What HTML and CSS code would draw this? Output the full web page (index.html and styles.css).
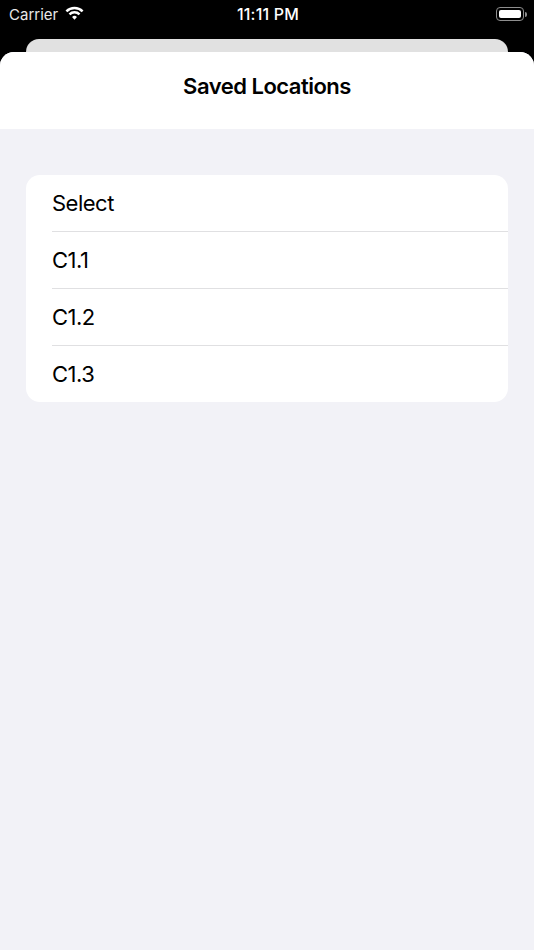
FILE: index.html
```html
<!DOCTYPE html>
<html lang="en">
<head>
    <meta charset="UTF-8">
    <meta name="viewport" content="width=device-width, initial-scale=1.0">
    <title>Saved Locations</title>
    <link rel="stylesheet" href="styles.css">
</head>
<body>
    <div class="status-bar">
        <div class="status-left">
            <span class="carrier">Carrier</span>
            <svg class="wifi" width="19" height="14" viewBox="0 0 18.5 13.5">
                <path d="M1.35 5.1A11.2 11.2 0 0 1 17.15 5.1" fill="none" stroke="#fff" stroke-width="2.4"/>
                <path d="M4.37 8.12A6.9 6.9 0 0 1 14.13 8.12" fill="none" stroke="#fff" stroke-width="2.4"/>
                <path d="M9.25 13.4L6.85 10.6A3.4 3.4 0 0 1 11.65 10.6Z" fill="#fff"/>
            </svg>
        </div>
        <div class="status-time">11:11 PM</div>
        <div class="status-right">
            <div class="battery"><div class="battery-level"></div></div>
            <div class="battery-cap"></div>
        </div>
    </div>

    <div class="back-sheet"></div>

    <main class="sheet">
        <header class="sheet-header">
            <h1 class="sheet-title">Saved Locations</h1>
        </header>
        <div class="sheet-body">
            <ul class="list-group">
                <li class="list-item">Select</li>
                <li class="list-item">C1.1</li>
                <li class="list-item">C1.2</li>
                <li class="list-item">C1.3</li>
            </ul>
        </div>
    </main>
</body>
</html>
```

FILE: styles.css
```css
* {
    box-sizing: border-box;
}
html, body {
    height: 100%;
}
body {
    margin: 0;
    background: #000;
    color: #000;
    font-family: "Inter", "Liberation Sans", sans-serif;
    display: flex;
    flex-direction: column;
    overflow: hidden;
}
.status-bar {
    height: 39px;
    flex: none;
    padding: 0 7px 11px 9px;
    display: grid;
    grid-template-columns: 1fr auto 1fr;
    align-items: center;
    color: #fff;
}
.status-left {
    display: flex;
    align-items: center;
    gap: 7px;
}
.carrier {
    font-size: 15px;
    color: #e8e8e8;
}
.wifi {
    margin-top: -2px;
}
.status-time {
    font-size: 16px;
    font-weight: 500;
    letter-spacing: 0.2px;
}
.status-right {
    display: flex;
    align-items: center;
    justify-content: flex-end;
    gap: 1px;
}
.battery {
    width: 28px;
    height: 14px;
    border: 1px solid #8e8e8e;
    border-radius: 4px;
    padding: 2px;
}
.battery-level {
    height: 100%;
    background: #fff;
    border-radius: 2px;
}
.battery-cap {
    width: 2px;
    height: 5px;
    background: #8e8e8e;
    border-radius: 0 2px 2px 0;
}
.back-sheet {
    height: 13px;
    flex: none;
    margin: 0 26px;
    background: #e1e1e1;
    border-radius: 13px 13px 0 0;
}
.sheet {
    flex: 1;
    display: flex;
    flex-direction: column;
    background: #f2f2f7;
    border-radius: 14px 14px 0 0;
    overflow: hidden;
}
.sheet-header {
    height: 77px;
    flex: none;
    background: #fff;
    display: flex;
    align-items: center;
    justify-content: center;
    padding-bottom: 10px;
}
.sheet-title {
    margin: 0;
    font-size: 22px;
    font-weight: 600;
    letter-spacing: -0.5px;
}
.sheet-body {
    padding: 46px 26px;
}
.list-group {
    list-style: none;
    margin: 0;
    padding: 0;
    background: #fff;
    border-radius: 14px;
    overflow: hidden;
}
.list-item {
    height: 57px;
    margin-left: 26px;
    display: flex;
    align-items: center;
    font-size: 22px;
    letter-spacing: -0.5px;
    border-bottom: 1px solid #e0e0e2;
}
.list-item:last-child {
    height: 56px;
    border-bottom: none;
}
```
